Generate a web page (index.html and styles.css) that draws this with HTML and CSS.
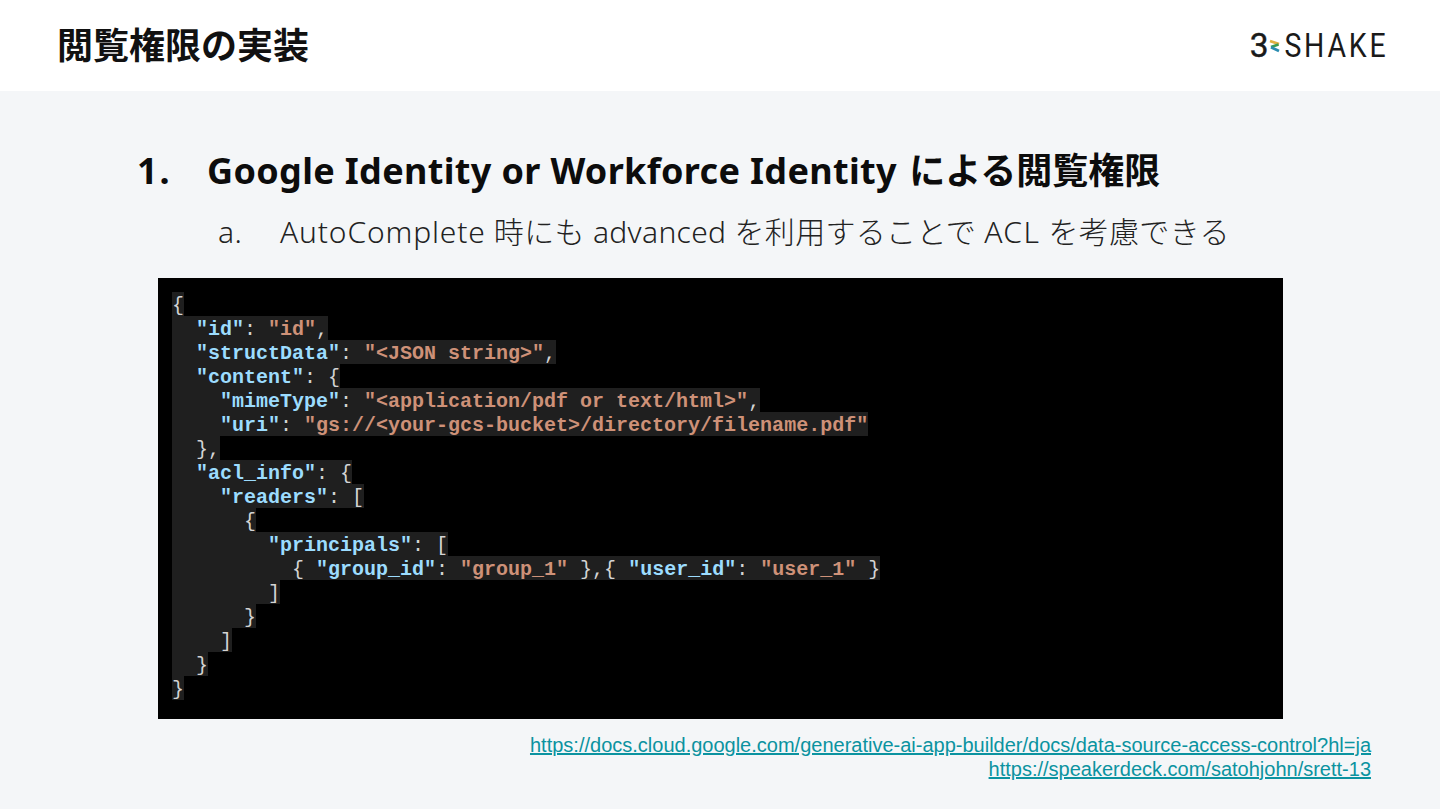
FILE: index.html
```html
<!DOCTYPE html>
<html lang="ja">
<head>
<meta charset="utf-8">
<title>閲覧権限の実装</title>
<link rel="stylesheet" href="styles.css">
</head>
<body>
<div class="slide">
  <header class="top">
    <h1 class="title">閲覧権限の実装</h1>
    <div class="logo">
      <span class="logo-3">3</span>
      <svg class="mark" width="12" height="16" viewBox="0 0 12 16" aria-hidden="true">
        <path d="M1 3 L10 6" stroke="#e0b040" stroke-width="2.8" fill="none"/>
        <path d="M9.5 6.5 L2 9" stroke="#3a9a50" stroke-width="2.8" fill="none"/>
        <path d="M2 9.3 L10 13" stroke="#2a8cb0" stroke-width="2.8" fill="none"/>
      </svg>
      <span class="logo-word">SHAKE</span>
    </div>
  </header>
  <main class="content">
    <div class="h-row"><span class="h-num">1.</span><span><span class="h-lat">Google Identity or Workforce Identity</span> による閲覧権限</span></div>
    <div class="s-row"><span class="s-num">a.</span><span><span class="s-auto">AutoComplete</span> 時にも advanced を利用することで <span class="s-acl">ACL</span> を考慮できる</span></div>
    <div class="code">
      <div class="l"><span class="p">{</span></div>
      <div class="l"><span class="p">  <b class="k">"id"</b>: <b class="s">"id"</b>,</span></div>
      <div class="l"><span class="p">  <b class="k">"structData"</b>: <b class="s">"&lt;JSON string&gt;"</b>,</span></div>
      <div class="l"><span class="p">  <b class="k">"content"</b>: {</span></div>
      <div class="l"><span class="p">    <b class="k">"mimeType"</b>: <b class="s">"&lt;application/pdf or text/html&gt;"</b>,</span></div>
      <div class="l"><span class="p">    <b class="k">"uri"</b>: <b class="s">"gs://&lt;your-gcs-bucket&gt;/directory/filename.pdf"</b></span></div>
      <div class="l"><span class="p">  },</span></div>
      <div class="l"><span class="p">  <b class="k">"acl_info"</b>: {</span></div>
      <div class="l"><span class="p">    <b class="k">"readers"</b>: [</span></div>
      <div class="l"><span class="p">      {</span></div>
      <div class="l"><span class="p">        <b class="k">"principals"</b>: [</span></div>
      <div class="l"><span class="p">          { <b class="k">"group_id"</b>: <b class="s">"group_1"</b> },{ <b class="k">"user_id"</b>: <b class="s">"user_1"</b> }</span></div>
      <div class="l"><span class="p">        ]</span></div>
      <div class="l"><span class="p">      }</span></div>
      <div class="l"><span class="p">    ]</span></div>
      <div class="l"><span class="p">  }</span></div>
      <div class="l"><span class="p">}</span></div>
    </div>
    <div class="links">
      <a href="#">https://docs.cloud.google.com/generative-ai-app-builder/docs/data-source-access-control?hl=ja</a>
      <a href="#">https://speakerdeck.com/satohjohn/srett-13</a>
    </div>
  </main>
</div>
</body>
</html>
```
FILE: styles.css
```css
* { box-sizing: border-box; }
html, body { margin: 0; padding: 0; }
body { width: 1440px; height: 810px; overflow: hidden; background: #fff; }
.slide { width: 1440px; height: 809px; background: #f4f6f8; display: flex; flex-direction: column; }
.top { height: 91px; background: #fff; display: flex; align-items: center; justify-content: space-between; padding: 0 55px 0 57px; flex: none; }
.title { margin: -6px 0 0; font: 700 36px/1 "Noto Sans CJK JP", sans-serif; color: #111; }
.logo { display: flex; align-items: center; font: 400 33.5px/1 "Roboto", sans-serif; color: #1a1a1a; }
.logo-3 { font-weight: 400; font-size: 33.5px; -webkit-text-stroke: 0.4px #1a1a1a; }
.mark { margin: 0 3px 0 0; }
.logo-word { display: inline-block; letter-spacing: 3.3px; margin: 0 -3px 0 -18px; transform: scaleX(0.85); transform-origin: right center; }
.content { padding: 58px 0 0 137px; flex: 1; }
.h-row { display: flex; font: 700 36px/44px "Noto Sans", "Noto Sans CJK JP", sans-serif; color: #0c0c0c; height: 44px; }
.h-num { width: 70px; letter-spacing: 2px; }
.h-lat { letter-spacing: 0.34px; margin-right: 3px; }
.s-row { display: flex; margin: 19px 0 0 81px; font: 300 30px/40px "Noto Sans", "Noto Sans CJK JP", sans-serif; color: #222; height: 40px; letter-spacing: 0.32px; }
.s-num { width: 62px; }
.s-auto { letter-spacing: 0.85px; }
.s-acl { letter-spacing: 1.4px; }
.code { width: 1125px; height: 441px; margin: 26px 0 0 21px; background: #000; padding: 14px; font: 400 20px/24px "Liberation Mono", monospace; color: #d4d4d4; }
.l { height: 24px; white-space: pre; }
.p { display: inline-block; height: 24px; line-height: 28px; vertical-align: top; background: #1f1f1f; }
.k { color: #9cdcfe; font-weight: 700; }
.s { color: #ce9178; font-weight: 700; }
.links { width: 1234px; margin-top: 14px; display: flex; flex-direction: column; align-items: flex-end; font: 400 20px/24px "Liberation Sans", sans-serif; }
.links a { color: #0b93a0; text-decoration: underline; }
```
